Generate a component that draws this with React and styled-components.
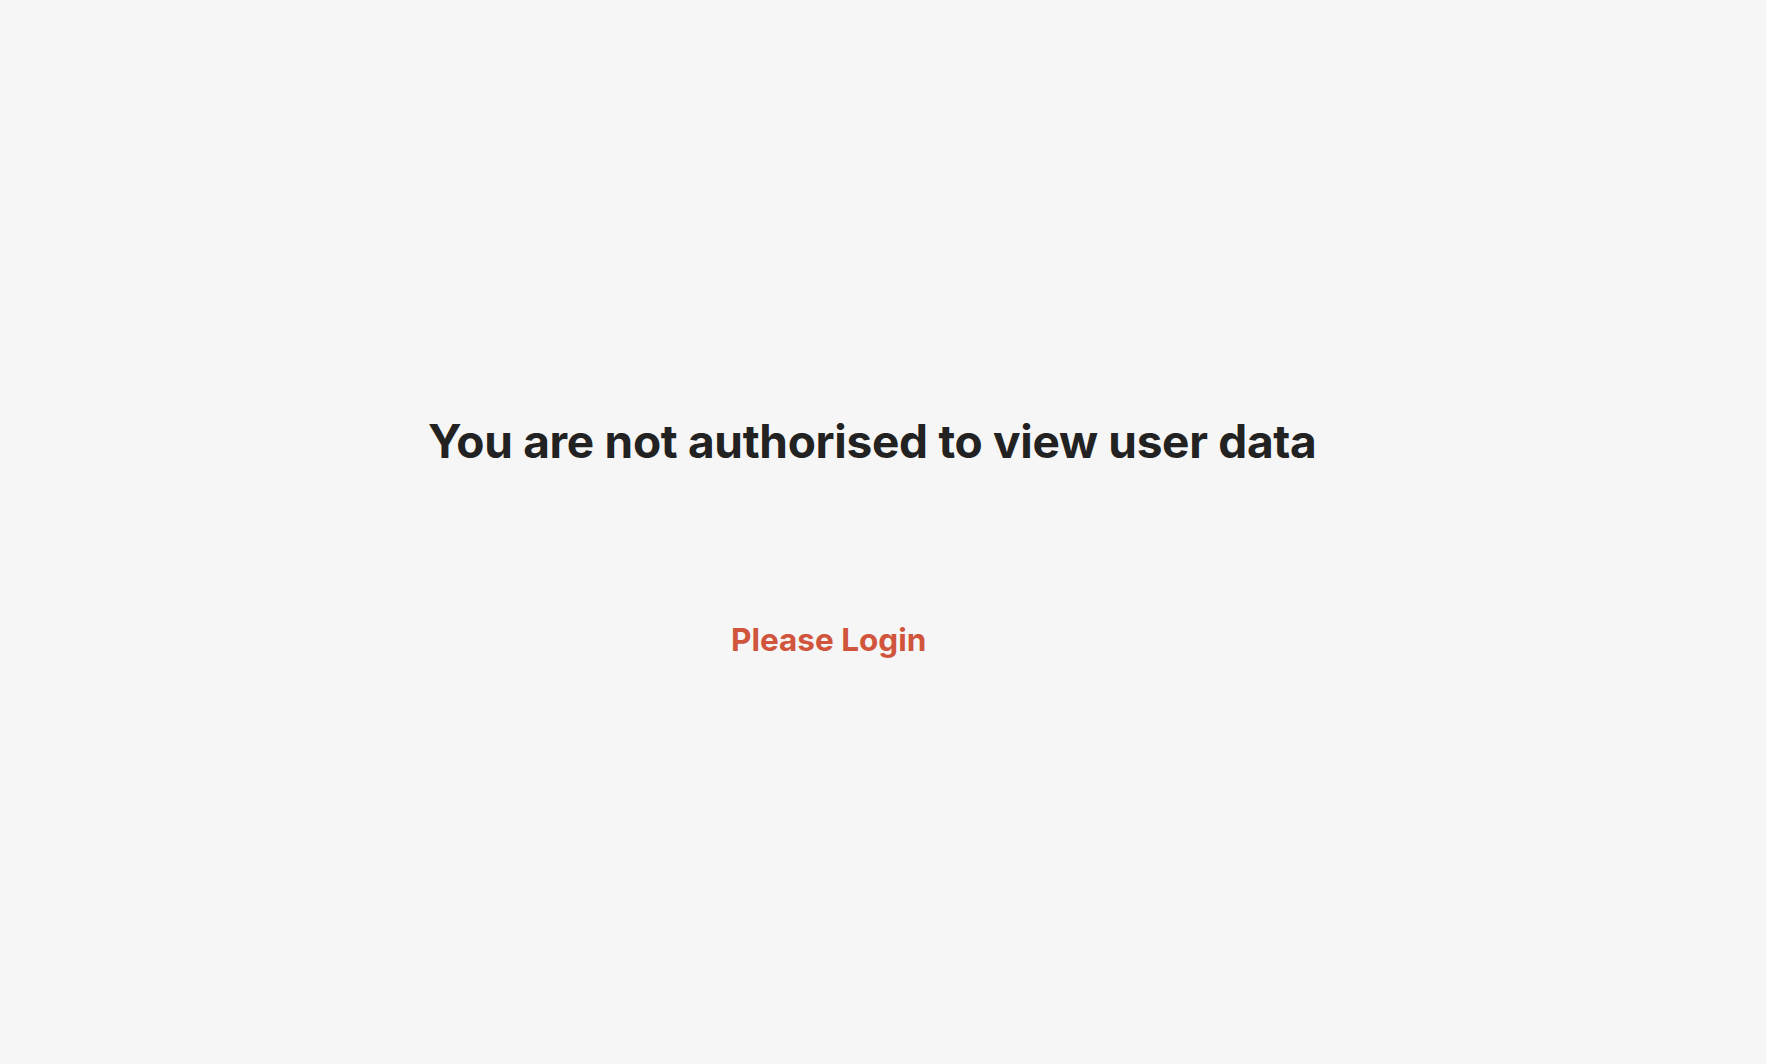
import React from 'react';
import styled, { createGlobalStyle } from 'styled-components';

const GlobalStyle = createGlobalStyle`
  html, body {
    margin: 0;
    padding: 0;
    background: #f6f6f6;
    font-family: Inter, "Noto Sans", sans-serif;
  }
`;

const Page = styled.main`
  min-height: 100vh;
  box-sizing: border-box;
  padding: 412px 0 0 428px;
  display: flex;
  flex-direction: column;
  align-items: flex-start;
`;

const Heading = styled.h1`
  margin: 0;
  font-size: 46px;
  font-weight: 700;
  line-height: 58px;
  color: #222222;
  letter-spacing: -0.3px;
`;

const LoginLink = styled.a`
  margin: 150px 0 0 303px;
  font-size: 31.5px;
  font-weight: 700;
  line-height: 40px;
  color: #d0553c;
  text-decoration: none;
  cursor: pointer;
`;

export default function App() {
  return (
    <>
      <GlobalStyle />
      <Page>
        <Heading>You are not authorised to view user data</Heading>
        <LoginLink href="#">Please Login</LoginLink>
      </Page>
    </>
  );
}
